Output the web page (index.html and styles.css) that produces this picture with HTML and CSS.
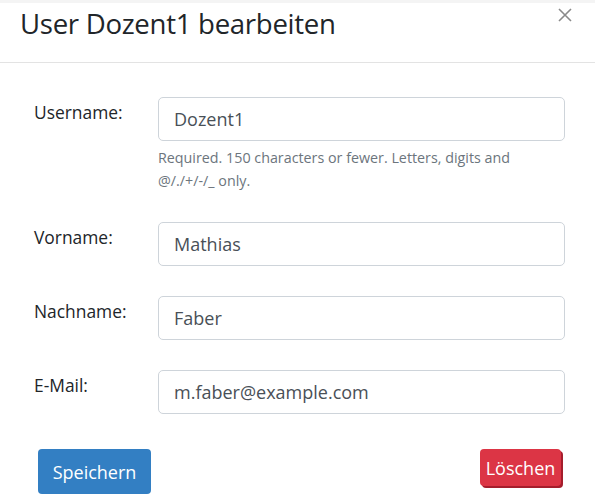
FILE: index.html
```html
<!DOCTYPE html>
<html lang="de">
<head>
<meta charset="utf-8">
<title>User Dozent1 bearbeiten</title>
<link rel="stylesheet" href="styles.css">
</head>
<body>
<div class="modal">
  <div class="modal-header">
    <h5 class="modal-title">User Dozent1 bearbeiten</h5>
    <button class="close" type="button" aria-label="Close">
      <svg width="14" height="14" viewBox="0 0 14 14"><path d="M1 1L13 13M13 1L1 13" stroke="#8a8a8a" stroke-width="1.6" fill="none"/></svg>
    </button>
  </div>
  <form class="modal-body">
    <div class="form-row">
      <label class="form-label">Username:</label>
      <div class="field">
        <input class="form-control" type="text" value="Dozent1">
        <small class="help">Required. 150 characters or fewer. Letters, digits and @/./+/-/_ only.</small>
      </div>
    </div>
    <div class="form-row">
      <label class="form-label">Vorname:</label>
      <div class="field"><input class="form-control" type="text" value="Mathias"></div>
    </div>
    <div class="form-row">
      <label class="form-label">Nachname:</label>
      <div class="field"><input class="form-control" type="text" value="Faber"></div>
    </div>
    <div class="form-row">
      <label class="form-label">E-Mail:</label>
      <div class="field"><input class="form-control" type="text" value="m.faber@example.com"></div>
    </div>
    <div class="actions">
      <button class="btn btn-primary" type="button">Speichern</button>
      <button class="btn btn-danger" type="button">Löschen</button>
    </div>
  </form>
</div>
</body>
</html>
```

FILE: styles.css
```css
* { box-sizing: border-box; }
html, body { margin: 0; padding: 0; background: #fff; }
body {
  font-family: "Open Sans", "Noto Sans", sans-serif;
  color: #212529;
  width: 595px;
  height: 502px;
  overflow: hidden;
}
.modal {
  border-top: 3px solid #f4f4f4;
}
.modal-header {
  height: 60px;
  border-bottom: 1px solid #e3e3e3;
  display: flex;
  justify-content: space-between;
  align-items: flex-start;
  padding: 0 23px 0 20px;
}
.modal-title {
  margin: 0;
  font-size: 27.6px;
  font-weight: 400;
  line-height: 40px;
  letter-spacing: -0.3px;
}
.close {
  border: 0;
  background: none;
  padding: 0;
  margin-top: 5px;
  width: 14px;
  height: 14px;
  display: block;
}
.close svg { display: block; }
.modal-body {
  margin: 0;
  padding: 34px 30px 0 34px;
  display: flex;
  flex-direction: column;
  gap: 30px;
}
.form-row {
  display: flex;
  align-items: flex-start;
}
.form-label {
  width: 124px;
  flex: none;
  font-size: 17.4px;
  line-height: 24px;
  padding-top: 3px;
}
.field { flex: 1; display: flex; flex-direction: column; }
.form-control {
  display: block;
  width: 100%;
  height: 44px;
  border: 1px solid #ced4da;
  border-radius: 5px;
  padding: 0 15px;
  font-family: inherit;
  font-size: 18px;
  color: #495057;
  background: #fff;
  outline: none;
}
.help {
  display: block;
  margin-top: 5px;
  font-size: 14.3px;
  line-height: 23px;
  color: #6c757d;
  padding-right: 30px;
}
.actions {
  display: flex;
  justify-content: space-between;
  align-items: flex-start;
  padding: 5px 4px 0 4px;
}
.btn {
  border: 0;
  color: #fff;
  font-family: inherit;
  font-size: 18px;
  border-radius: 4px;
  padding: 0;
  cursor: pointer;
}
.btn-primary {
  background: #337fc3;
  width: 113px;
  height: 45px;
}
.btn-danger {
  background: #dc3545;
  width: 81px;
  height: 37px;
  box-shadow: 2px 2px 0 #a51d2c;
}
```
